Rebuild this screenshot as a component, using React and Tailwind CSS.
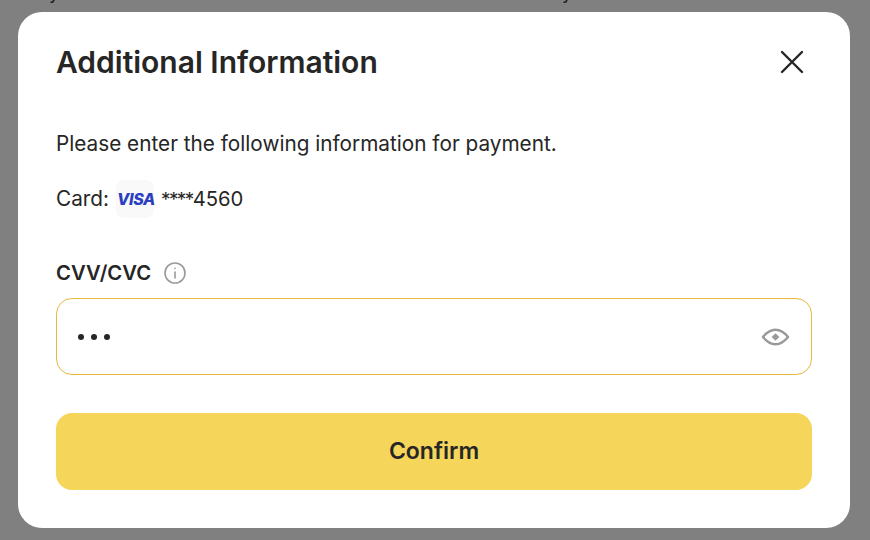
import React from "react";

const VisaLogo = () => (
  <div className="flex h-[38px] w-[38px] items-center justify-center rounded-lg bg-[#f9f9f9]">
    <span className="ml-[2px] text-[16px] font-extrabold italic leading-none tracking-[-0.4px] text-[#2a3fc0]">VISA</span>
  </div>
);

const App = () => {
  return (
    <div className="relative h-[540px] w-[870px] overflow-hidden bg-[#808080] pl-[18px] pt-3 font-['Inter',sans-serif] text-[#262626]">
      {/* descenders of the page text behind the overlay */}
      <span className="absolute left-[49px] top-[-18px] text-[18px] leading-[22px] text-[#1a1a1a]">y</span>
      <span className="absolute left-[562px] top-[-18px] text-[18px] leading-[22px] text-[#1a1a1a]">y</span>

      <div className="relative flex h-[516px] w-[832px] flex-col rounded-[24px] bg-white px-[38px] pt-[30px]">
        <div className="flex h-[40px] items-center justify-between">
          <h2 className="text-[30px] font-semibold leading-none">Additional Information</h2>
          <button className="mr-2 flex h-6 w-6 items-center justify-center">
            <svg width="24" height="24" viewBox="0 0 24 24" fill="none" stroke="#262626" strokeWidth="2.4" strokeLinecap="round">
              <path d="M2 2l20 20M22 2L2 22" />
            </svg>
          </button>
        </div>

        <p className="mt-[50px] text-[20.75px] leading-6">Please enter the following information for payment.</p>

        <div className="mt-[24px] flex items-center text-[20.75px]">
          <span>Card:</span>
          <div className="ml-[7px] mr-[7px]"><VisaLogo /></div>
          <span><span className="text-[19px] tracking-[-1.6px]">****</span><span className="text-[20.25px]">4560</span></span>
        </div>

        <div className="mt-[43px] flex items-center gap-[12px]">
          <label className="text-[20.25px] font-semibold leading-6">CVV/CVC</label>
          <svg width="24" height="24" viewBox="0 0 24 24" fill="none" stroke="#9a9a9a" strokeWidth="1.6" strokeLinecap="round">
            <circle cx="12" cy="12" r="10" />
            <path d="M12 11v6M12 7.4v.2" />
          </svg>
        </div>

        <div className="mt-[13px] flex h-[77px] items-center justify-between rounded-[16px] border border-[#e8b93c] pl-[21px] pr-[21px]">
          <div className="flex gap-[7px]">
            <span className="h-[6px] w-[6px] rounded-full bg-[#262626]" />
            <span className="h-[6px] w-[6px] rounded-full bg-[#262626]" />
            <span className="h-[6px] w-[6px] rounded-full bg-[#262626]" />
          </div>
          <svg width="29" height="20" viewBox="0 0 30 20" fill="none" stroke="#9a9a9a" strokeWidth="2.4" strokeLinejoin="round">
            <path d="M2 10C6 5 10 2.5 15 2.5s9 2.5 13 7.5c-4 5-8 7.5-13 7.5s-9-2.500-13-7.500z" />
            <path d="M15 6l4 4-4 4-4-4z" fill="#9a9a9a" stroke="none" />
          </svg>
        </div>

        <button className="mt-[38px] h-[77px] w-full rounded-[16px] bg-[#f5d55a] text-[23px] font-semibold text-[#262626]">
          Confirm
        </button>
      </div>
    </div>
  );
};

export default App;
